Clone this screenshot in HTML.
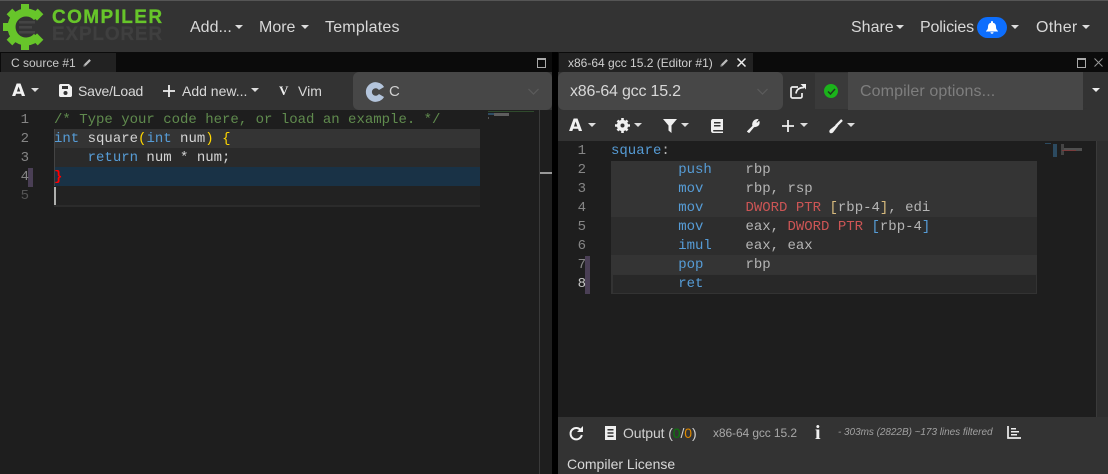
<!DOCTYPE html>
<html><head><meta charset="utf-8"><style>
html,body{margin:0;padding:0;width:1108px;height:474px;overflow:hidden;background:#000}
body{position:relative;font-family:"Liberation Sans",sans-serif;color:#ddd}
.a{position:absolute}
.t{position:absolute;white-space:pre;line-height:20px}
.m{position:absolute;white-space:pre;font-family:"Liberation Mono",monospace;font-size:14px;line-height:19px;height:19px;margin-top:1px}
.c{position:absolute;width:0;height:0;border-left:4px solid transparent;border-right:4px solid transparent;border-top:4px solid #ddd}
.n{color:#858585;text-align:right;width:20px}
.b{color:#569cd6}.g{color:#608b4e}.y{color:#ffd700}.r{color:#d16969}.w{color:#d4d4d4}.o{color:#b5b5b5}
svg{position:absolute;overflow:visible}
</style></head><body>
<!-- nav -->
<div class="a" style="left:0;top:0;width:1108px;height:52px;background:#333;border-top:1px solid #555;box-sizing:border-box"></div>
<svg style="left:0;top:0" width="50" height="52" viewBox="0 0 50 52">
<g fill="#67c52a">
<rect x="21" y="4" width="8" height="9"/>
<rect x="21" y="41" width="8" height="9"/>
<rect x="3" y="23" width="9" height="8"/>
<g transform="rotate(45 25 27)"><rect x="21" y="5" width="8" height="9"/></g>
<g transform="rotate(-45 25 27)"><rect x="21" y="5" width="8" height="9"/></g>
<g transform="rotate(135 25 27)"><rect x="21" y="5" width="8" height="9"/></g>
<g transform="rotate(-135 25 27)"><rect x="21" y="5" width="8" height="9"/></g>
</g>
<path d="M37 17.500A14.500 14.500 0 1 0 37 36.500" fill="none" stroke="#67c52a" stroke-width="8"/>
<path d="M19 21h16v2.500H19zM19 26h13v2.500H19zM19 31h16v2.500H19z" fill="#444"/>
</svg>
<div class="t" style="left:52px;top:8px;font-size:19px;font-weight:bold;color:#67c52a;letter-spacing:1.4px;-webkit-text-stroke:.3px #67c52a">COMPILER</div>
<div class="t" style="left:52px;top:25px;font-size:19px;font-weight:bold;color:#3f3f3f;letter-spacing:.8px;-webkit-text-stroke:.3px #3f3f3f">EXPLORER</div>
<div class="t" style="left:190px;top:18px;font-size:16px;color:#d8d8d8">Add...</div><div class="c" style="left:235px;top:25px"></div>
<div class="t" style="left:259px;top:18px;font-size:16px;color:#d8d8d8">More</div><div class="c" style="left:301px;top:25px"></div>
<div class="t" style="left:325px;top:18px;font-size:16px;color:#d8d8d8;letter-spacing:.2px">Templates</div>
<div class="t" style="left:851px;top:18px;font-size:16px;color:#d8d8d8">Share</div><div class="c" style="left:896px;top:25px"></div>
<div class="t" style="left:920px;top:18px;font-size:16px;color:#d8d8d8;letter-spacing:-.15px">Policies</div>
<div class="a" style="left:977px;top:17px;width:30px;height:21px;border-radius:11px;background:#0d6efd"></div>
<svg style="left:986px;top:21px" width="12" height="13" viewBox="0 0 12 13"><path d="M6 0c.6 0 1 .4 1 1v.7c2 .4 3 2 3 4 0 2 .5 3 2 4.300v.5H0v-.5C1.500 8.700 2 7.700 2 5.700c0-2 1-3.600 3-4V1c0-.6.400-1 1-1zM4.500 11.300h3a1.500 1.500 0 0 1-3 0z" fill="#fff"/></svg>
<div class="c" style="left:1011px;top:25px"></div>
<div class="t" style="left:1036px;top:18px;font-size:16px;color:#d8d8d8;letter-spacing:.3px">Other</div><div class="c" style="left:1082px;top:25px"></div>

<!-- tab bars -->
<div class="a" style="left:0;top:52px;width:552px;height:20px;background:#0b0b0b"></div>
<div class="a" style="left:558px;top:52px;width:550px;height:20px;background:#0b0b0b"></div>
<div class="a" style="left:1px;top:53px;width:115px;height:19px;background:#222"></div>
<div class="t" style="left:11px;top:53px;font-size:12px;color:#c8c8c8">C source #1</div>
<svg style="left:83px;top:58px" width="9" height="9" viewBox="0 0 9 9"><path d="M0 9l.6-2.600L6.300.7l2 2L2.600 8.400zM1.400 6.800l.8.800" fill="#bbb" stroke="#222" stroke-width=".6"/></svg>
<div class="a" style="left:537px;top:58px;width:7px;height:7px;border:1px solid #aaa;border-top-width:2px"></div>
<div class="a" style="left:559px;top:53px;width:194px;height:19px;background:#222"></div>
<div class="t" style="left:568px;top:53px;font-size:12px;color:#d0d0d0">x86-64 gcc 15.2 (Editor #1)</div>
<svg style="left:720px;top:58px" width="9" height="9" viewBox="0 0 9 9"><path d="M0 9l.6-2.600L6.300.7l2 2L2.600 8.400zM1.400 6.800l.8.800" fill="#bbb" stroke="#222" stroke-width=".6"/></svg>
<svg style="left:737px;top:58px" width="9" height="9" viewBox="0 0 9 9"><path d="M.5.500l8 8M8.500.500l-8 8" stroke="#eee" stroke-width="1.500"/></svg>
<div class="a" style="left:1077px;top:58px;width:7px;height:7px;border:1px solid #aaa;border-top-width:2px"></div>
<svg style="left:1094px;top:58px" width="9" height="9" viewBox="0 0 9 9"><path d="M.5.500l8 8M8.500.500l-8 8" stroke="#999" stroke-width="1"/></svg>

<!-- left toolbar -->
<div class="a" style="left:0;top:72px;width:552px;height:38px;background:#333"></div>
<div class="t" style="left:12px;top:81px;font-size:17px;font-weight:bold;color:#f2f2f2;font-family:'DejaVu Sans',sans-serif">A</div><div class="c" style="left:31px;top:88px"></div>
<svg style="left:59px;top:84px" width="13" height="13" viewBox="0 0 13 13"><path fill-rule="evenodd" d="M1.500 0H10l3 3v8.500c0 .8-.7 1.500-1.500 1.500h-10C.7 13 0 12.300 0 11.500v-10C0 .7.700 0 1.500 0zM3 2v3h6V2zM6.500 7a2 2 0 1 0 0 4 2 2 0 0 0 0-4z" fill="#f0f0f0"/></svg>
<div class="t" style="left:78px;top:81px;font-size:14px;color:#d8d8d8;letter-spacing:-.2px">Save/Load</div>
<svg style="left:163px;top:85px" width="12" height="12" viewBox="0 0 12 12"><path d="M6 0v12M0 6h12" stroke="#eee" stroke-width="1.800"/></svg>
<div class="t" style="left:182px;top:81px;font-size:14px;color:#d8d8d8">Add new...</div><div class="c" style="left:251px;top:88px"></div>
<div class="t" style="left:279px;top:81px;font-size:13px;font-weight:bold;color:#eee;font-family:'Liberation Serif',serif">V</div>
<div class="t" style="left:298px;top:81px;font-size:14px;color:#d8d8d8">Vim</div>
<div class="a" style="left:353px;top:72px;width:199px;height:38px;background:#474747;border-radius:6px 6px 6px 6px"></div>
<svg style="left:365px;top:82px" width="20" height="20" viewBox="0 0 20 20"><path d="M16.500 6.500A6.800 6.800 0 1 0 16.500 13.500" fill="none" stroke="#b4c5dc" stroke-width="6"/></svg>
<div class="t" style="left:389px;top:82px;font-size:15px;color:#d0d0d0">C</div>
<svg style="left:528px;top:88px" width="11" height="7" viewBox="0 0 11 7"><path d="M.5 1l5 5 5-5" fill="none" stroke="#5c5c5c" stroke-width="1.200"/></svg>

<!-- left editor -->
<div class="a" style="left:0;top:110px;width:552px;height:364px;background:#1e1e1e"></div>
<div class="a" style="left:54px;top:129px;width:426px;height:19px;background:#343434"></div>
<div class="a" style="left:54px;top:148px;width:426px;height:19px;background:#2a2a2a"></div>
<div class="a" style="left:54px;top:167px;width:426px;height:19px;background:#193246"></div>
<div class="a" style="left:54px;top:186px;width:426px;height:19px;background:#222;border-bottom:2px solid #2b2b2b"></div>
<div class="a" style="left:54px;top:129px;width:1px;height:57px;background:#444"></div>
<div class="a" style="left:54px;top:187px;width:2px;height:18px;background:#aeafad"></div>
<div class="a" style="left:28px;top:168px;width:5px;height:19px;background:#4a3f55"></div>
<div class="m n" style="left:9px;top:110px">1</div>
<div class="m n" style="left:9px;top:129px">2</div>
<div class="m n" style="left:9px;top:148px">3</div>
<div class="m n" style="left:9px;top:167px">4</div>
<div class="m n" style="left:9px;top:186px;color:#555">5</div>
<div class="m g" style="left:54px;top:110px">/* Type your code here, or load an example. */</div>
<div class="m w" style="left:54px;top:129px"><span class="b">int</span> square<span class="y">(</span><span class="b">int</span> num<span class="y">)</span> <span class="y">{</span></div>
<div class="m w" style="left:54px;top:148px">    <span class="b">return</span> num * num;</div>
<div class="m" style="left:54px;top:167px;color:#f00;font-weight:bold">}</div>
<!-- minimap left -->
<div class="a" style="left:488px;top:111px;width:46px;height:1px;background:#2f4a2c"></div>
<div class="a" style="left:488px;top:113px;width:6px;height:2px;background:#2f4c63"></div>
<div class="a" style="left:494px;top:113px;width:15px;height:3px;background:#5e5e5e"></div>
<div class="a" style="left:488px;top:117px;width:1px;height:2px;background:#555"></div>
<div class="a" style="left:539px;top:110px;width:1px;height:364px;background:#3a3a3a"></div>
<div class="a" style="left:540px;top:172px;width:12px;height:2px;background:#999"></div>

<!-- gutter -->
<div class="a" style="left:552px;top:52px;width:6px;height:422px;background:#000"></div>

<!-- compiler bar -->
<div class="a" style="left:558px;top:72px;width:550px;height:38px;background:#333"></div>
<div class="a" style="left:558px;top:72px;width:225px;height:38px;background:#474747;border-radius:6px"></div>
<div class="t" style="left:570px;top:81px;font-size:16px;color:#d8d8d8;letter-spacing:-.2px;margin-top:1px">x86-64 gcc 15.2</div>
<svg style="left:757px;top:88px" width="11" height="7" viewBox="0 0 11 7"><path d="M.5 1l5 5 5-5" fill="none" stroke="#5c5c5c" stroke-width="1.200"/></svg>
<svg style="left:790px;top:84px" width="16" height="15" viewBox="0 0 16 15"><path d="M8 3H2.500C1.700 3 1 3.700 1 4.500v8c0 .8.700 1.500 1.500 1.500h8c.8 0 1.500-.7 1.500-1.500V9M6 9.500c.5-4 3-6 8-6" fill="none" stroke="#eee" stroke-width="1.700"/><path d="M10.500 0H16v5.500z" fill="#eee"/></svg>
<div class="a" style="left:815px;top:73px;width:33px;height:36px;background:#3a3a3a"></div>
<div class="a" style="left:824px;top:84px;width:14px;height:14px;border-radius:50%;background:#1bb31b"></div>
<svg style="left:827px;top:88px" width="9" height="7" viewBox="0 0 9 7"><path d="M1 3.500l2.500 2.500L8 1" fill="none" stroke="#1d3a1d" stroke-width="1.500"/></svg>
<div class="a" style="left:848px;top:72px;width:235px;height:38px;background:#474747"></div>
<div class="t" style="left:860px;top:82px;font-size:16px;color:#7e7e7e;letter-spacing:.1px">Compiler options...</div>
<div class="a" style="left:1083px;top:72px;width:25px;height:37px;background:#333;border-radius:0 0 0 4px"></div>
<div class="c" style="left:1092px;top:88px;border-top-color:#eee"></div>

<!-- compiler toolbar -->
<div class="a" style="left:558px;top:110px;width:550px;height:31px;background:#333"></div>
<div class="t" style="left:569px;top:116px;font-size:17px;font-weight:bold;color:#f2f2f2;font-family:'DejaVu Sans',sans-serif">A</div><div class="c" style="left:588px;top:123px"></div>
<svg style="left:615px;top:118px" width="15" height="15" viewBox="0 0 15 15"><circle cx="7.500" cy="7.500" r="4" fill="none" stroke="#f0f0f0" stroke-width="3.200"/><path d="M7.500 0v15M0 7.500h15M2.500 2.500l10 10M12.500 2.500l-10 10" stroke="#f0f0f0" stroke-width="2.600"/><circle cx="7.500" cy="7.500" r="2" fill="#333"/></svg>
<div class="c" style="left:634px;top:123px"></div>
<svg style="left:663px;top:119px" width="14" height="14" viewBox="0 0 14 14"><path d="M0 0h14L8.500 6.500V14l-3-2.500V6.500z" fill="#f0f0f0"/></svg>
<div class="c" style="left:681px;top:123px"></div>
<svg style="left:711px;top:119px" width="12" height="14" viewBox="0 0 12 14"><path fill-rule="evenodd" d="M2 0h10v11H2.500a1 1 0 0 0 0 1.500H12V14H2c-1.100 0-2-.9-2-2V2C0 .9.900 0 2 0zM3 3v1.500h6.500V3zM3 6v1.500h6.500V6z" fill="#f0f0f0"/></svg>
<svg style="left:746px;top:118px" width="15" height="15" viewBox="0 0 15 15"><path d="M1.500 13.500L7 8c-1-2.500.5-6 4-6.500l1 .1L9.800 4l1.200 1.500L13 3.500c.8 3-1.500 5.500-5 5L3 14.500z" fill="#f0f0f0" stroke="#f0f0f0" stroke-width="1" stroke-linejoin="round"/></svg>
<svg style="left:782px;top:120px" width="12" height="12" viewBox="0 0 12 12"><path d="M6 0v12M0 6h12" stroke="#eee" stroke-width="1.800"/></svg>
<div class="c" style="left:800px;top:123px"></div>
<svg style="left:828px;top:119px" width="15" height="15" viewBox="0 0 15 15"><path d="M14 1L8 7" stroke="#f0f0f0" stroke-width="2.400"/><path d="M8.500 5.500l1.500 1.500L5 13.500c-1 1-3 1-3.500-.3-.5-1 .0-2.200 1-3z" fill="#f0f0f0"/></svg>
<div class="c" style="left:847px;top:123px"></div>

<!-- asm editor -->
<div class="a" style="left:558px;top:141px;width:550px;height:276px;background:#1e1e1e"></div>
<div class="a" style="left:611px;top:161px;width:426px;height:56px;background:#343434"></div>
<div class="a" style="left:611px;top:217px;width:426px;height:38px;background:#2d2d2d"></div>
<div class="a" style="left:611px;top:255px;width:426px;height:19px;background:#343434"></div>
<div class="a" style="left:611px;top:274px;width:426px;height:20px;background:#282828;box-sizing:border-box;border:1px solid #333;border-left:2px solid #333"></div>
<div class="a" style="left:585px;top:256px;width:5px;height:38px;background:#4a3f55"></div>
<div class="m n" style="left:566px;top:141px">1</div>
<div class="m n" style="left:566px;top:160px">2</div>
<div class="m n" style="left:566px;top:179px">3</div>
<div class="m n" style="left:566px;top:198px">4</div>
<div class="m n" style="left:566px;top:217px">5</div>
<div class="m n" style="left:566px;top:236px">6</div>
<div class="m n" style="left:566px;top:255px">7</div>
<div class="m n" style="left:566px;top:274px;color:#c6c6c6">8</div>
<div class="m" style="left:611px;top:141px"><span class="b">square</span><span class="o">:</span></div>
<div class="m o" style="left:611px;top:160px">        <span class="b">push</span>    rbp</div>
<div class="m o" style="left:611px;top:179px">        <span class="b">mov</span>     rbp, rsp</div>
<div class="m o" style="left:611px;top:198px">        <span class="b">mov</span>     <span style="color:#c55">DWORD PTR</span> <span style="color:#d7ba7d">[</span>rbp-4<span style="color:#d7ba7d">]</span>, edi</div>
<div class="m o" style="left:611px;top:217px">        <span class="b">mov</span>     eax, <span style="color:#c55">DWORD PTR</span> <span style="color:#569cd6">[</span>rbp-4<span style="color:#569cd6">]</span></div>
<div class="m o" style="left:611px;top:236px">        <span class="b">imul</span>    eax, eax</div>
<div class="m o" style="left:611px;top:255px">        <span class="b">pop</span>     rbp</div>
<div class="m o" style="left:611px;top:274px">        <span class="b">ret</span></div>
<!-- asm minimap -->
<div class="a" style="left:1045px;top:143px;width:6px;height:1px;background:#2c4a60"></div>
<div class="a" style="left:1053px;top:144px;width:4px;height:13px;background:#2c4a60"></div>
<div class="a" style="left:1061px;top:144px;width:3px;height:11px;background:#444"></div>
<div class="a" style="left:1064px;top:148px;width:18px;height:3px;background:#4f4f4f"></div>
<div class="a" style="left:1062px;top:150px;width:14px;height:1px;background:#7a3c3c"></div>
<div class="a" style="left:1096px;top:141px;width:1px;height:276px;background:#3a3a3a"></div>
<div class="a" style="left:1097px;top:141px;width:11px;height:276px;background:#2e2e2e"></div>

<!-- output bar -->
<div class="a" style="left:558px;top:417px;width:550px;height:57px;background:#333"></div>
<svg style="left:569px;top:426px" width="14" height="14" viewBox="0 0 14 14"><path d="M12 4.500A5.700 5.700 0 1 0 12.800 9" fill="none" stroke="#f2f2f2" stroke-width="2"/><path d="M14 0v6H8z" fill="#f2f2f2"/></svg>
<svg style="left:605px;top:426px" width="11" height="14" viewBox="0 0 11 14"><path fill-rule="evenodd" d="M0 0h11v14H0zM2.500 3v1.500h6V3zM2.500 6.200v1.500h6V6.200zM2.500 9.500V11h6V9.500z" fill="#eee"/></svg>
<div class="t" style="left:623px;top:423px;font-size:14px;color:#d0d0d0;letter-spacing:-.1px">Output (<span style="color:#0a7a0a">0</span>/<span style="color:#e08a00">0</span>)</div>
<div class="t" style="left:713px;top:423px;font-size:12px;color:#a8a8a8;letter-spacing:-.1px">x86-64 gcc 15.2</div>
<div class="t" style="left:815px;top:423px;font-size:20px;font-weight:bold;color:#f0f0f0;font-family:'Liberation Serif',serif">i</div>
<div class="t" style="left:838px;top:423px;font-size:10px;font-style:italic;color:#a0a0a0;letter-spacing:-.04px">- 303ms (2822B) ~173 lines filtered</div>
<svg style="left:1007px;top:426px" width="14" height="13" viewBox="0 0 14 13"><path d="M1 0v12h13" fill="none" stroke="#eee" stroke-width="1.700"/><path d="M4 2h5v1.500H4zM4 5h8v1.500H4zM4 8h6v1.500H4z" fill="#eee"/></svg>
<div class="t" style="left:567px;top:454px;font-size:14px;color:#d8d8d8">Compiler License</div>
</body></html>
